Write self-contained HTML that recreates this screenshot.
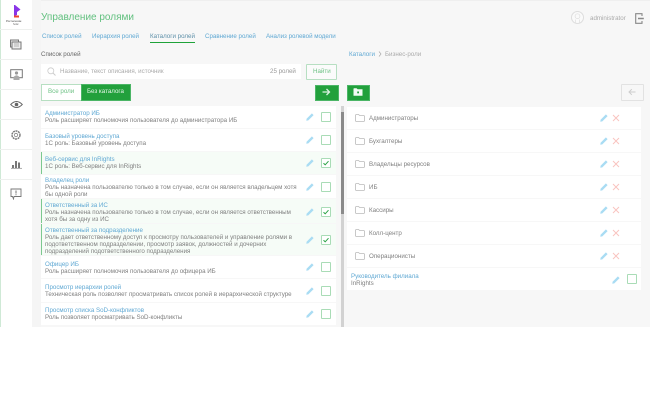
<!DOCTYPE html>
<html><head><meta charset="utf-8"><style>
html,body{margin:0;padding:0;background:#fff;width:650px;height:403px;overflow:hidden}
body{font-family:"Liberation Sans",sans-serif;position:relative;filter:blur(.3px)}
div,span,svg{position:absolute}
.t{white-space:nowrap;line-height:8px;font-size:6.2px;color:#808080;margin-top:1px}
.l{color:#5fa8d3}
.r{left:41px;width:295px;background:#fff}
.g{background:#f6fcf7;box-shadow:inset 1px 0 0 #7cc98f}
.c{width:8px;height:8px;border:1px solid #a9dcb6;border-radius:1px;left:321px;background:#fff}
.rr{left:347px;width:294px;height:22px;background:#fff}
.d{left:0;width:32px;height:1px;background:#eef0ee}
</style></head><body>
<svg width="0" height="0" style="left:0;top:0"><defs>
<symbol id="p" viewBox="0 0 8 8"><path d="M.3 7.7L.6 5.7L5.9 .4L7.6 2.1L2.3 7.4Z" fill="#a9dcf3"/></symbol>
<symbol id="x" viewBox="0 0 8 8"><path d="M1 1L7 7M7 1L1 7" stroke="#f9c4c0" stroke-width="1" fill="none"/></symbol>
<symbol id="f" viewBox="0 0 10 8"><path d="M.5 1.5Q.5 .5 1.5 .5H3.6L4.6 1.5H8.5Q9.5 1.5 9.5 2.5V6.5Q9.5 7.5 8.5 7.5H1.5Q.5 7.5 .5 6.5Z" stroke="#bbb" stroke-width=".8" fill="#fff"/></symbol>
<symbol id="k" viewBox="0 0 8 8"><path d="M1.5 4.2L3.2 5.8L6.5 2.2" stroke="#2aa345" stroke-width="1" fill="none"/></symbol>
</defs></svg>

<div style="left:0;top:0;width:650px;height:327px;background:#f7f7f7"></div>
<div style="left:0;top:0;width:650px;height:1px;background:#efefef"></div>
<div style="left:0;top:0;width:32px;height:327px;background:#fff"></div>
<div style="left:0;top:0;width:1px;height:327px;background:#cfe9d6"></div>
<div style="left:32px;top:0;width:9px;height:327px;background:#f5f5f5"></div>
<div class="d" style="top:29px"></div><div class="d" style="top:59px"></div><div class="d" style="top:89px"></div><div class="d" style="top:119px"></div><div class="d" style="top:149px"></div><div class="d" style="top:179px"></div>

<svg style="left:12px;top:4px" width="10" height="14" viewBox="0 0 10 14"><path d="M2 1L3 1L8.5 5.5L5 8L5 11L2 12Z" fill="#8a35e8"/><rect x="2" y="11.5" width="5" height="2" fill="#f0442e"/></svg>
<span class="t" style="left:6px;top:16px;font-size:2.8px;color:#444">Ростелеком</span>
<span class="t" style="left:13px;top:20px;font-size:2.4px;color:#666">Solar</span>

<svg style="left:9px;top:39px" width="14" height="12" viewBox="0 0 14 12" fill="#eee" stroke="#777" stroke-width="1"><rect x="1.5" y="1" width="8" height="7"/><rect x="3" y="3" width="9" height="7"/><path d="M5 5H10M5 7H10" stroke-width=".6"/></svg>
<svg style="left:10px;top:69px" width="13" height="12" viewBox="0 0 13 12"><rect x=".7" y=".7" width="11.6" height="8" fill="#fff" stroke="#777"/><circle cx="6.5" cy="4" r="1.6" fill="#999"/><path d="M3.5 8Q6.5 4.5 9.5 8V11H3.5Z" fill="#aaa"/></svg>
<svg style="left:10px;top:100px" width="13" height="9" viewBox="0 0 13 9"><path d="M.7 4.5Q6.5 -1.5 12.3 4.5Q6.5 10.5 .7 4.5Z" fill="#fff" stroke="#666" stroke-width=".9"/><circle cx="6.5" cy="4.5" r="1.8" fill="#666"/></svg>
<svg style="left:10px;top:129px" width="12" height="12" viewBox="0 0 12 12"><circle cx="6" cy="6" r="4" fill="none" stroke="#777" stroke-width="1.4" stroke-dasharray="2 .6"/><circle cx="6" cy="6" r="1.7" fill="none" stroke="#888" stroke-width=".8"/></svg>
<svg style="left:11px;top:158px" width="11" height="11" viewBox="0 0 11 11"><path d="M1 10V7H3V10ZM4 10V3H6V10ZM7 10V4.5H9V10Z" fill="#777"/><path d="M0 10.3H11" stroke="#888" stroke-width=".7"/></svg>
<svg style="left:10px;top:188px" width="12" height="12" viewBox="0 0 12 12"><path d="M1 1H11V8.5H4L3.5 11L2.5 8.5H1Z" fill="#fff" stroke="#777" stroke-width=".9"/><path d="M6 2.5V5.5M6 6.3V7.3" stroke="#666" stroke-width=".9"/></svg>

<span class="t" style="left:41px;top:10px;font-size:10px;line-height:14px;color:#62c07f">Управление ролями</span>
<span class="t l" style="left:42px;top:32px">Список ролей</span>
<span class="t l" style="left:92px;top:32px">Иерархия ролей</span>
<span class="t l" style="left:150px;top:32px;color:#5d8fa8">Каталоги ролей</span>
<div style="left:150px;top:42px;width:45px;height:1px;background:#1fa33a"></div>
<span class="t l" style="left:205px;top:32px">Сравнение ролей</span>
<span class="t l" style="left:266px;top:32px">Анализ ролевой модели</span>
<span class="t" style="left:41px;top:50px;color:#666">Список ролей</span>
<span class="t l" style="left:349px;top:50px">Каталоги</span>
<svg style="left:378px;top:51px" width="4" height="6" viewBox="0 0 4 6"><path d="M1 .5L3 3L1 5.5" stroke="#aaa" stroke-width=".7" fill="none"/></svg>
<span class="t" style="left:385px;top:50px;color:#aaa">Бизнес-роли</span>

<svg style="left:571px;top:11px" width="13" height="13" viewBox="0 0 13 13"><circle cx="6.5" cy="6.5" r="6" fill="#fafafa" stroke="#ddd"/><circle cx="6.5" cy="5.2" r="2.4" fill="none" stroke="#ddd" stroke-width=".7"/><path d="M4.5 12V8.5M8.5 12V8.5" stroke="#ddd" stroke-width=".7"/></svg>
<span class="t" style="left:590px;top:14px;color:#aaa">administrator</span>
<svg style="left:635px;top:13px" width="9" height="11" viewBox="0 0 9 11"><path d="M7 3V.7H.7V10.3H7V8" fill="none" stroke="#888" stroke-width="1.1"/><path d="M3 5.5H8.8" stroke="#888" stroke-width="1.5"/></svg>

<div style="left:41px;top:64px;width:260px;height:15px;background:#fff"></div>
<svg style="left:47px;top:67px" width="9" height="9" viewBox="0 0 9 9"><circle cx="3.8" cy="3.8" r="3" fill="none" stroke="#ccc" stroke-width=".8"/><path d="M6 6L8.5 8.5" stroke="#ccc"/></svg>
<span class="t" style="left:60px;top:67px;color:#aaa">Название, текст описания, источник</span>
<span class="t" style="left:270px;top:67px;color:#999">25 ролей</span>
<div style="left:306px;top:64px;width:29px;height:14px;border:1px solid #b7dfc2;border-radius:1px;background:#fbfbfb"></div>
<span class="t" style="left:313px;top:67px;color:#6dc184">Найти</span>

<div style="left:41px;top:84px;width:39px;height:15px;border:1px solid #b7dfc2;background:#fff"></div>
<span class="t" style="left:48px;top:87px;color:#6dc184">Все роли</span>
<div style="left:81px;top:84px;width:48px;height:15px;border:1px solid #4bb566;background:#22a03c"></div>
<span class="t" style="left:87px;top:87px;color:#e6f5e9">Без каталога</span>
<div style="left:315px;top:85px;width:22px;height:14px;border:1px solid #4bb566;background:#22a03c"></div>
<svg style="left:322px;top:88px" width="9" height="8" viewBox="0 0 9 8"><path d="M.5 4H7.5M4.5 1L7.5 4L4.5 7" stroke="#d8f0de" stroke-width="1.3" fill="none"/></svg>
<div style="left:347px;top:85px;width:21px;height:14px;border:1px solid #4bb566;background:#22a03c"></div>
<svg style="left:353px;top:88px" width="10" height="8" viewBox="0 0 10 8"><path d="M.5 1Q.5 .3 1.2 .3H3.6L4.6 1.3H9.5V7.7H.5Z" fill="#f2fbf4"/><rect x="4.2" y="3.5" width="1.8" height="1.8" fill="#22a03c"/></svg>
<div style="left:621px;top:84px;width:21px;height:15px;border:1px solid #e2e2e2;border-radius:1px;background:#f7f7f7"></div>
<svg style="left:628px;top:88px" width="8" height="8" viewBox="0 0 8 8"><path d="M7.5 4H1M3.8 1.2L1 4L3.8 6.8" stroke="#cdcdcd" stroke-width="1" fill="none"/></svg>

<div class="r" style="top:106px;height:22px"></div>
<div class="r" style="top:129px;height:22px"></div>
<div class="r g" style="top:152px;height:22px"></div>
<div class="r" style="top:175px;height:23px"></div>
<div class="r g" style="top:199px;height:24px"></div>
<div class="r g" style="top:224px;height:31px"></div>
<div class="r" style="top:256px;height:22px"></div>
<div class="r" style="top:279px;height:23px"></div>
<div class="r" style="top:303px;height:22px"></div>

<span class="t l" style="left:45px;top:109px">Администратор ИБ</span>
<span class="t" style="left:45px;top:116px">Роль расширяет полномочия пользователя до администратора ИБ</span>
<span class="t l" style="left:45px;top:132px">Базовый уровень доступа</span>
<span class="t" style="left:45px;top:139px">1С роль: Базовый уровень доступа</span>
<span class="t l" style="left:45px;top:155px">Веб-сервис для InRights</span>
<span class="t" style="left:45px;top:162px">1С роль: Веб-сервис для InRights</span>
<span class="t l" style="left:45px;top:176px">Владелец роли</span>
<span class="t" style="left:45px;top:183px">Роль назначена пользователю только в том случае, если он является владельцем хотя</span>
<span class="t" style="left:45px;top:190px">бы одной роли</span>
<span class="t l" style="left:45px;top:201px">Ответственный за ИС</span>
<span class="t" style="left:45px;top:208px">Роль назначена пользователю только в том случае, если он является ответственным</span>
<span class="t" style="left:45px;top:215px">хотя бы за одну из ИС</span>
<span class="t l" style="left:45px;top:226px">Ответственный за подразделение</span>
<span class="t" style="left:45px;top:233px">Роль дает ответственному доступ к просмотру пользователей и управление ролями в</span>
<span class="t" style="left:45px;top:240px">подответственном подразделении, просмотр заявок, должностей и дочерних</span>
<span class="t" style="left:45px;top:247px">подразделений подответственного подразделения</span>
<span class="t l" style="left:45px;top:260px">Офицер ИБ</span>
<span class="t" style="left:45px;top:267px">Роль расширяет полномочия пользователя до офицера ИБ</span>
<span class="t l" style="left:45px;top:283px">Просмотр иерархии ролей</span>
<span class="t" style="left:45px;top:290px">Техническая роль позволяет просматривать список ролей в иерархической структуре</span>
<span class="t l" style="left:45px;top:306px">Просмотр списка SoD-конфликтов</span>
<span class="t" style="left:45px;top:313px">Роль позволяет просматривать SoD-конфликты</span>

<svg style="left:306px;top:113px" width="8" height="8"><use href="#p"/></svg><div class="c" style="top:112px"></div>
<svg style="left:306px;top:136px" width="8" height="8"><use href="#p"/></svg><div class="c" style="top:135px"></div>
<svg style="left:306px;top:159px" width="8" height="8"><use href="#p"/></svg><div class="c" style="top:158px"></div><svg style="left:322px;top:159px" width="8" height="8"><use href="#k"/></svg>
<svg style="left:306px;top:183px" width="8" height="8"><use href="#p"/></svg><div class="c" style="top:182px"></div>
<svg style="left:306px;top:208px" width="8" height="8"><use href="#p"/></svg><div class="c" style="top:207px"></div><svg style="left:322px;top:208px" width="8" height="8"><use href="#k"/></svg>
<svg style="left:306px;top:236px" width="8" height="8"><use href="#p"/></svg><div class="c" style="top:235px"></div><svg style="left:322px;top:236px" width="8" height="8"><use href="#k"/></svg>
<svg style="left:306px;top:263px" width="8" height="8"><use href="#p"/></svg><div class="c" style="top:262px"></div>
<svg style="left:306px;top:287px" width="8" height="8"><use href="#p"/></svg><div class="c" style="top:286px"></div>
<svg style="left:306px;top:310px" width="8" height="8"><use href="#p"/></svg><div class="c" style="top:309px"></div>

<div style="left:341px;top:106px;width:3px;height:221px;background:#d2d2d2"></div>
<div style="left:341px;top:112px;width:3px;height:102px;background:#8a8a8a"></div>

<div class="rr" style="top:107px"></div><div class="rr" style="top:130px"></div><div class="rr" style="top:153px"></div><div class="rr" style="top:176px"></div><div class="rr" style="top:199px"></div><div class="rr" style="top:222px"></div><div class="rr" style="top:245px"></div><div class="rr" style="top:268px"></div>

<svg style="left:355px;top:114px" width="10" height="8"><use href="#f"/></svg><span class="t" style="left:369px;top:114px">Администраторы</span>
<svg style="left:355px;top:137px" width="10" height="8"><use href="#f"/></svg><span class="t" style="left:369px;top:137px">Бухгалтеры</span>
<svg style="left:355px;top:160px" width="10" height="8"><use href="#f"/></svg><span class="t" style="left:369px;top:160px">Владельцы ресурсов</span>
<svg style="left:355px;top:183px" width="10" height="8"><use href="#f"/></svg><span class="t" style="left:369px;top:183px">ИБ</span>
<svg style="left:355px;top:206px" width="10" height="8"><use href="#f"/></svg><span class="t" style="left:369px;top:206px">Кассиры</span>
<svg style="left:355px;top:229px" width="10" height="8"><use href="#f"/></svg><span class="t" style="left:369px;top:229px">Колл-центр</span>
<svg style="left:355px;top:252px" width="10" height="8"><use href="#f"/></svg><span class="t" style="left:369px;top:252px">Операционисты</span>

<svg style="left:600px;top:114px" width="8" height="8"><use href="#p"/></svg><svg style="left:612px;top:114px" width="8" height="8"><use href="#x"/></svg>
<svg style="left:600px;top:137px" width="8" height="8"><use href="#p"/></svg><svg style="left:612px;top:137px" width="8" height="8"><use href="#x"/></svg>
<svg style="left:600px;top:160px" width="8" height="8"><use href="#p"/></svg><svg style="left:612px;top:160px" width="8" height="8"><use href="#x"/></svg>
<svg style="left:600px;top:183px" width="8" height="8"><use href="#p"/></svg><svg style="left:612px;top:183px" width="8" height="8"><use href="#x"/></svg>
<svg style="left:600px;top:206px" width="8" height="8"><use href="#p"/></svg><svg style="left:612px;top:206px" width="8" height="8"><use href="#x"/></svg>
<svg style="left:600px;top:229px" width="8" height="8"><use href="#p"/></svg><svg style="left:612px;top:229px" width="8" height="8"><use href="#x"/></svg>
<svg style="left:600px;top:252px" width="8" height="8"><use href="#p"/></svg><svg style="left:612px;top:252px" width="8" height="8"><use href="#x"/></svg>

<span class="t l" style="left:351px;top:272px">Руководитель филиала</span>
<span class="t" style="left:351px;top:279px">InRights</span>
<svg style="left:612px;top:276px" width="8" height="8"><use href="#p"/></svg>
<div class="c" style="left:627px;top:274px"></div>
</body></html>
